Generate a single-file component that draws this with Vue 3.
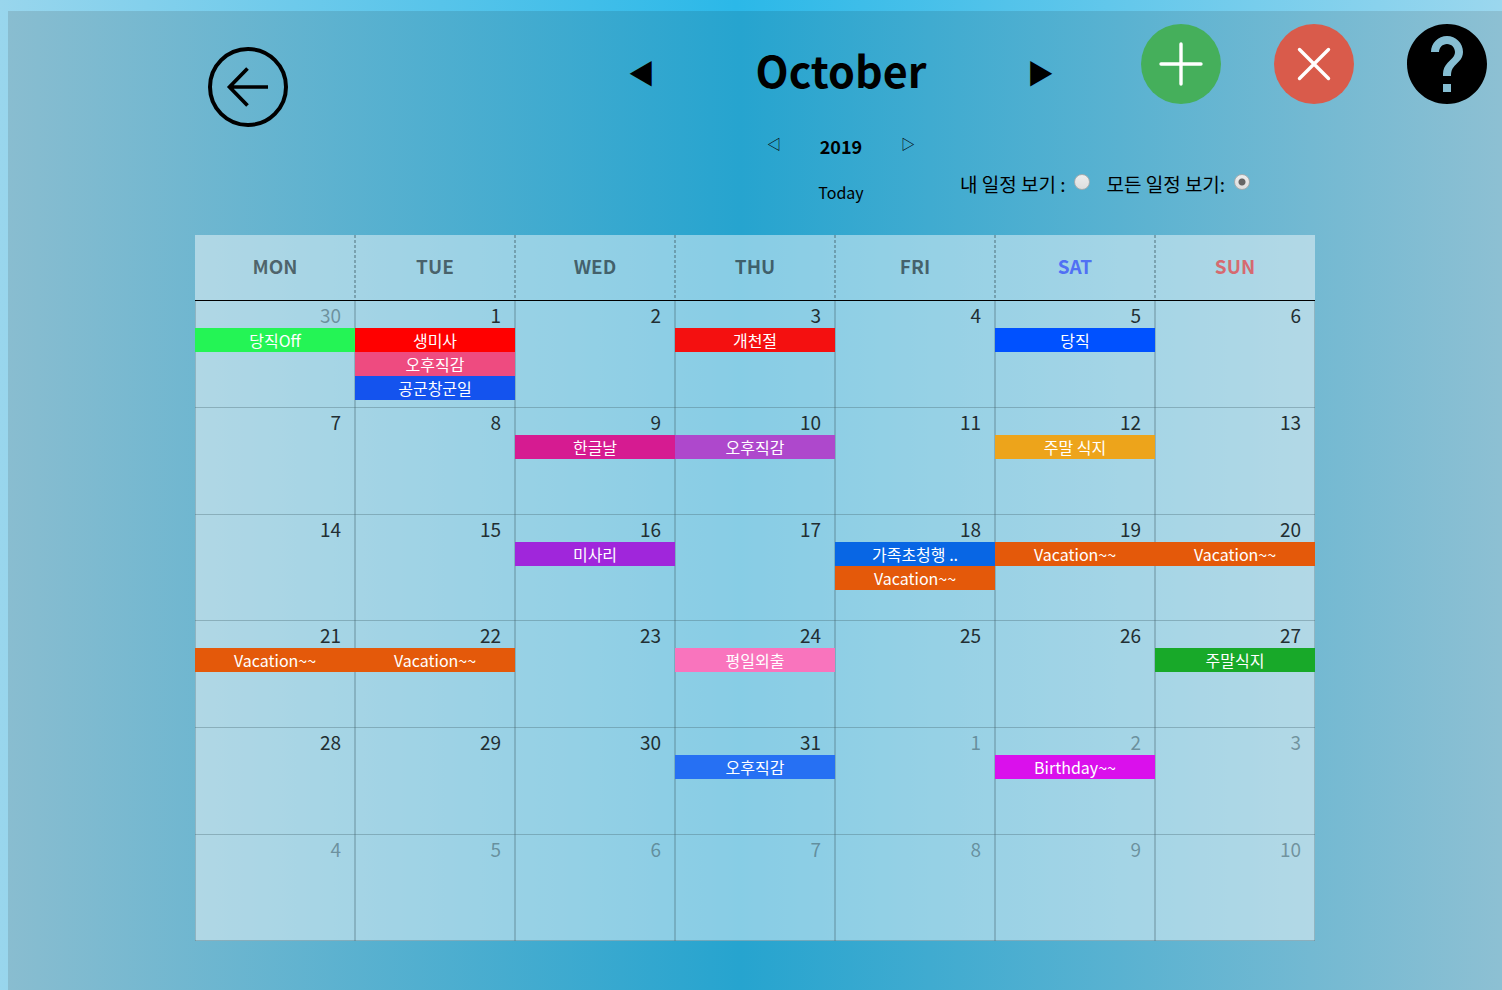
<script setup>
import { ref } from 'vue'

const view = ref('all')

const weekdays = ['MON', 'TUE', 'WED', 'THU', 'FRI', 'SAT', 'SUN']

const events = {
  '9-30': [{ title: '당직Off', color: '#24f455' }],
  '10-1': [
    { title: '생미사', color: '#ff0000' },
    { title: '오후직감', color: '#ee4b80' },
    { title: '공군창군일', color: '#1453ee' },
  ],
  '10-3': [{ title: '개천절', color: '#f41010' }],
  '10-5': [{ title: '당직', color: '#0051ff' }],
  '10-9': [{ title: '한글날', color: '#d61b91' }],
  '10-10': [{ title: '오후직감', color: '#ae48cc' }],
  '10-12': [{ title: '주말 식지', color: '#eda41b' }],
  '10-16': [{ title: '미사리', color: '#a026db' }],
  '10-18': [
    { title: '가족초청행 ..', color: '#0866e4' },
    { title: 'Vacation~~', color: '#e4590a' },
  ],
  '10-19': [{ title: 'Vacation~~', color: '#e4590a' }],
  '10-20': [{ title: 'Vacation~~', color: '#e4590a' }],
  '10-21': [{ title: 'Vacation~~', color: '#e4590a' }],
  '10-22': [{ title: 'Vacation~~', color: '#e4590a' }],
  '10-24': [{ title: '평일외출', color: '#f974bd' }],
  '10-27': [{ title: '주말식지', color: '#18a929' }],
  '10-31': [{ title: '오후직감', color: '#2670f3' }],
  '11-2': [{ title: 'Birthday~~', color: '#da10ec' }],
}

// Six Monday-first weeks, starting with 30 September 2019
const weeks = Array.from({ length: 6 }, (_, w) =>
  Array.from({ length: 7 }, (_, d) => {
    const date = new Date(2019, 8, 30 + w * 7 + d)
    const month = date.getMonth() + 1
    const day = date.getDate()
    const key = `${month}-${day}`
    return { key, day, outside: month !== 10, events: events[key] || [] }
  })
)
</script>

<template>
  <div class="page">
    <main class="panel">
      <header class="top">
        <button class="icon-button back" type="button" aria-label="Back">
          <svg viewBox="0 0 80 80" fill="none" stroke="#000" stroke-width="4">
            <circle cx="40" cy="40" r="38" />
            <path d="M60 40H22M39.5 21.5L21.5 40L39.5 58.5" stroke-width="3.7" />
          </svg>
        </button>
        <div class="month-nav">
          <button type="button" aria-label="Previous month">◀</button>
          <h1>October</h1>
          <button type="button" aria-label="Next month">▶</button>
        </div>
        <div class="actions">
          <button class="icon-button" type="button" aria-label="Add event">
            <svg viewBox="0 0 80 80">
              <circle cx="40" cy="40" r="40" fill="#45af5b" />
              <path d="M20 40H60M40 20V60" stroke="#fff" stroke-width="3.4" stroke-linecap="round" />
            </svg>
          </button>
          <button class="icon-button" type="button" aria-label="Remove event">
            <svg viewBox="0 0 80 80">
              <circle cx="40" cy="40" r="40" fill="#d95b4b" />
              <path d="M25.5 25.5L54.5 54.5M54.5 25.5L25.5 54.5" stroke="#fff" stroke-width="3.4" stroke-linecap="round" />
            </svg>
          </button>
          <button class="icon-button" type="button" aria-label="Help">
            <svg viewBox="2 2 20 20">
              <path
                d="M12 2C6.48 2 2 6.48 2 12s4.48 10 10 10 10-4.48 10-10S17.52 2 12 2zm1 17h-2v-2h2v2zm2.07-7.75l-.9.92C13.45 12.9 13 13.5 13 15h-2v-.5c0-1.1.45-2.1 1.17-2.83l1.24-1.26c.37-.36.59-.86.59-1.41 0-1.1-.9-2-2-2s-2 .9-2 2H8c0-2.21 1.79-4 4-4s4 1.79 4 4c0 .88-.36 1.68-.93 2.25z"
              />
            </svg>
          </button>
        </div>
      </header>

      <section class="sub">
        <div class="year-block">
          <div class="year-nav">
            <button type="button" aria-label="Previous year">◁</button>
            <h2>2019</h2>
            <button type="button" aria-label="Next year">▷</button>
          </div>
          <button class="today" type="button">Today</button>
        </div>
        <form class="filters">
          <label for="view-mine">내 일정 보기 :</label>
          <input id="view-mine" v-model="view" type="radio" name="view" value="mine" />
          <label for="view-all">모든 일정 보기:</label>
          <input id="view-all" v-model="view" type="radio" name="view" value="all" />
        </form>
      </section>

      <table class="calendar">
        <thead>
          <tr>
            <th v-for="name in weekdays" :key="name" scope="col" :class="name.toLowerCase()">{{ name }}</th>
          </tr>
        </thead>
        <tbody>
          <tr v-for="(week, i) in weeks" :key="i">
            <td v-for="cell in week" :key="cell.key">
              <div class="day" :class="{ outside: cell.outside }">{{ cell.day }}</div>
              <div v-for="event in cell.events" :key="event.title" class="event" :style="{ background: event.color }">
                {{ event.title }}
              </div>
            </td>
          </tr>
        </tbody>
      </table>
    </main>
  </div>
</template>

<style>
body {
  margin: 0;
}
</style>

<style scoped>
.page {
  box-sizing: border-box;
  display: flex;
  min-height: 100vh;
  padding: 11px 0 0 8px;
  background: linear-gradient(to right, #99d6ed, #2bb8e8 49%, #9bd7ee);
  color: #000;
  font-family: "Noto Sans CJK KR", sans-serif;
}

.panel {
  flex: 1;
  padding-bottom: 49px;
  background: linear-gradient(to right, #89bdd0, #26a4cf 49%, #8dc0d3);
}

button {
  padding: 0;
  border: 0;
  background: none;
  color: inherit;
  font-family: inherit;
  cursor: pointer;
}

h1,
h2 {
  margin: 0;
}

.top,
.sub {
  display: grid;
  padding-right: 15px;
  padding-left: calc(50% - 560px);
}

.top {
  grid-template-columns: 1fr 426px 1fr;
  align-items: start;
  height: 110px;
  padding-top: 13px;
}

.icon-button {
  width: 80px;
  height: 80px;
}

.icon-button svg {
  display: block;
  width: 100%;
  height: 100%;
}

.back {
  margin: 23px 0 0 13px;
}

.month-nav {
  display: flex;
  align-items: flex-start;
  justify-content: space-between;
  padding-top: 16px;
}

.month-nav h1 {
  font-size: 43px;
  line-height: 58px;
}

.month-nav button {
  font-size: 27px;
  line-height: 66px;
}

.actions {
  display: flex;
  gap: 53px;
  justify-content: flex-end;
}

.sub {
  grid-template-columns: 1fr 238px 1fr;
}

.year-block {
  display: flex;
  grid-column: 2;
  flex-direction: column;
  align-items: center;
}

.year-nav {
  display: flex;
  align-items: flex-start;
  justify-content: space-between;
  width: 148px;
}

.year-nav h2 {
  font-size: 18px;
  line-height: 24px;
}

.year-nav button {
  font-size: 14px;
  line-height: 18px;
}

.today {
  margin-top: 20px;
  font-size: 16px;
  line-height: 28px;
}

.filters {
  display: flex;
  align-items: center;
  align-self: end;
  height: 28px;
  margin-bottom: 8px;
  font-size: 19px;
  line-height: 26px;
  white-space: nowrap;
}

.filters input {
  box-sizing: border-box;
  width: 16px;
  height: 16px;
  margin: 0 16px 4px 9px;
  border: 1px solid #a6adaf;
  border-radius: 50%;
  background: linear-gradient(#ededed, #dedede);
  appearance: none;
}

.filters input:checked {
  background: radial-gradient(circle, #666 3px, transparent 4px), linear-gradient(#ededed, #dedede);
}

.calendar {
  width: 100%;
  max-width: 1120px;
  margin: 29px auto 0;
  border-spacing: 0;
  background: rgba(255, 255, 255, 0.45);
  table-layout: fixed;
}

th {
  --dash: repeating-linear-gradient(rgba(70, 100, 110, 0.45) 0 3px, transparent 3px 5px);
  box-sizing: border-box;
  height: 66px;
  padding: 0 0 3px;
  border-bottom: 1px solid #000;
  background: var(--dash) left / 1px 100% no-repeat, var(--dash) right / 1px 100% no-repeat;
  color: rgba(0, 0, 0, 0.55);
  font-size: 19px;
  font-weight: 700;
  line-height: 26px;
}

th:first-child {
  background: var(--dash) right / 1px 100% no-repeat;
}

th:last-child {
  background: var(--dash) left / 1px 100% no-repeat;
}

.sat {
  color: #5070f4;
}

.sun {
  color: #d66a70;
}

td {
  height: 107px;
  padding: 0;
  box-shadow: inset 1px 0 rgba(70, 100, 110, 0.3), inset -1px 0 rgba(70, 100, 110, 0.3),
    inset 0 -1px rgba(70, 100, 110, 0.35);
  vertical-align: top;
}

tr:nth-child(3n) td {
  height: 106px;
}

.day {
  padding-right: 14px;
  color: #222e32;
  font-size: 19px;
  line-height: 27px;
  text-align: right;
}

.outside {
  color: rgba(70, 100, 110, 0.6);
}

.event {
  color: #fff;
  font-size: 16px;
  line-height: 24px;
  text-align: center;
}
</style>
